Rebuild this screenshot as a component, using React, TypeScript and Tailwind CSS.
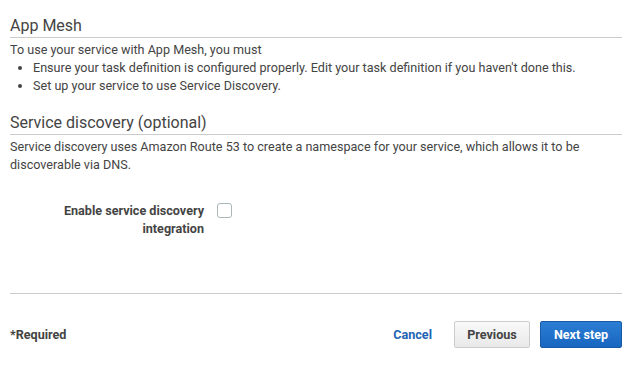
export default function App() {
  return (
    <div className="w-[640px] h-[369px] bg-white text-[#444] font-['Roboto',sans-serif] text-[12.6px] leading-[18px] overflow-hidden">
      <div className="w-[612px] ml-[10px]">
        {/* App Mesh */}
        <section className="pt-[16px]">
          <h2 className="text-[16px] leading-[20px] text-[#444] pb-[1px] border-b border-[#ccc]">App Mesh</h2>
          <div className="pt-[3px]">
            <p>To use your service with App Mesh, you must</p>
            <ul className="list-disc pl-[23px] marker:text-[#444]">
              <li>Ensure your task definition is configured properly. Edit your task definition if you haven't done this.</li>
              <li>Set up your service to use Service Discovery.</li>
            </ul>
          </div>
        </section>

        {/* Service discovery */}
        <section className="pt-[18px]">
          <h2 className="text-[16px] leading-[20px] text-[#444] pb-[1px] border-b border-[#ccc]">Service discovery (optional)</h2>
          <p className="pt-[3px]">
            Service discovery uses Amazon Route 53 to create a namespace for your service, which allows it to be discoverable via DNS.
          </p>
          <div className="flex items-start mt-[28px]">
            <label className="w-[194px] text-right font-bold text-[#444]">Enable service discovery integration</label>
            <span className="ml-[13px] mt-[1px] w-[15px] h-[15px] rounded-[3px] border border-[#aab7b8] bg-white" />
          </div>
        </section>

        <div className="mt-[55px] border-t border-[#ccc]" />

        {/* Footer */}
        <div className="flex items-center justify-between mt-[27px]">
          <span className="font-bold text-[#444]">*Required</span>
          <div className="flex items-center">
            <button className="font-bold text-[#1e64b4] mr-[22px]">Cancel</button>
            <button className="w-[76px] h-[27px] rounded-[2px] border border-[#ccc] bg-gradient-to-b from-[#f9f9f9] to-[#e9e9e9] font-bold text-[#444] mr-[10px]">Previous</button>
            <button className="w-[82px] h-[27px] rounded-[2px] border border-[#1a5aa5] bg-gradient-to-b from-[#2b7ed4] to-[#1766c0] font-bold text-white">Next step</button>
          </div>
        </div>
      </div>
    </div>
  );
}
